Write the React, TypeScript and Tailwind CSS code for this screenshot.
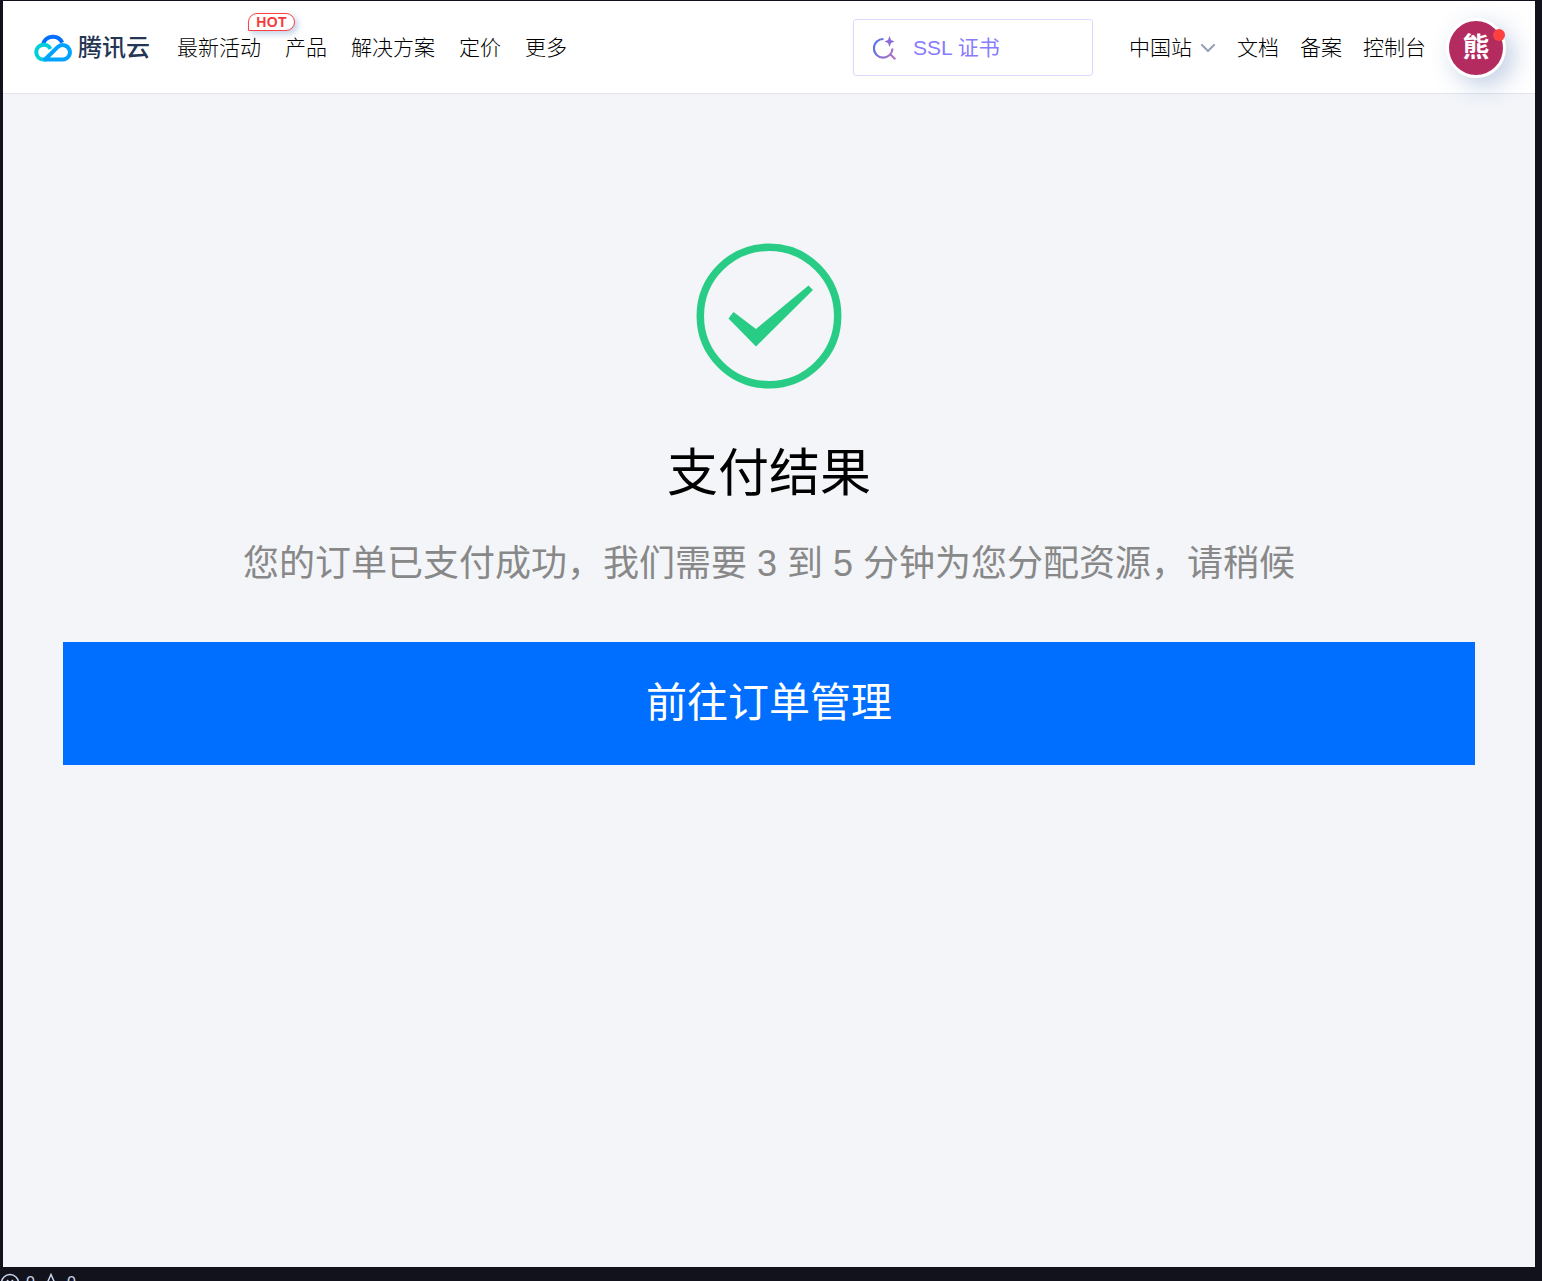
const NAV_LINKS = [
  { label: '最新活动', hot: true },
  { label: '产品', hot: false },
  { label: '解决方案', hot: false },
  { label: '定价', hot: false },
  { label: '更多', hot: false },
];

const USER_LINKS = ['文档', '备案', '控制台'];

function CloudLogo() {
  return (
    <svg width="38" height="28" viewBox="0 0 38 28" fill="none" strokeWidth="4" aria-hidden="true">
      <path d="M9.2 9.8 A10.2 10.2 0 0 1 28.2 8.6" stroke="#006eff" />
      <path d="M16.4 15 A7.4 7.4 0 1 0 9.2 25.5 H12" stroke="#00ced8" />
      <path d="M11 25.5 H28.8 A7.2 7.2 0 1 0 23.6 13.2 Z" stroke="#00a3ff" strokeLinejoin="round" />
    </svg>
  );
}

function SearchIcon() {
  return (
    <svg width="24" height="24" viewBox="0 0 24 24" fill="none" aria-hidden="true">
      <defs>
        <linearGradient id="searchGradient" x1="0" y1="4" x2="24" y2="22" gradientUnits="userSpaceOnUse">
          <stop stopColor="#4f6fee" />
          <stop offset="1" stopColor="#bd76c2" />
        </linearGradient>
      </defs>
      <path d="M10.5 3 A9.3 9.3 0 1 0 19.5 12.5 M16.8 17.8 L22.3 23.3" stroke="url(#searchGradient)" strokeWidth="2.2" />
      <path d="M16.5 0 L18 4 L21.5 5.5 L18 7 L16.5 11 L15 7 L11.5 5.5 L15 4 Z" fill="#8a6ddb" />
    </svg>
  );
}

function Header() {
  return (
    <header className="flex h-[93px] shrink-0 items-center border-b border-[#e2e4ea] bg-white pt-px pr-[29px] pl-[31px] text-[21px] leading-8 text-black">
      <a href="#" className="flex items-center gap-[6px] text-[24px] font-medium text-[#253554]">
        <CloudLogo />
        腾讯云
      </a>

      <nav className="ml-[27px] flex items-center gap-6 pt-px font-light">
        {NAV_LINKS.map((link) => (
          <a key={link.label} href="#" className="relative">
            {link.label}
            {link.hot && (
              <span className="absolute -top-[19px] left-[71px] flex h-[18px] w-[47px] items-center justify-center rounded-full rounded-bl-none border border-[#ff4040] bg-white text-[14px] font-bold tracking-wide text-[#f53b40] shadow-[3px_3px_6px_rgba(55,99,170,0.3)]">
                HOT
              </span>
            )}
          </a>
        ))}
      </nav>

      <label className="mr-9 ml-auto flex h-[57px] w-60 items-center gap-4 rounded-[3px] border border-[#dcd9ff] pl-[19px]">
        <SearchIcon />
        <input
          type="text"
          aria-label="搜索"
          placeholder="SSL 证书"
          className="w-40 bg-transparent outline-none placeholder:text-[#867cff]"
        />
      </label>

      <div className="flex items-center gap-[21px] pt-px font-light">
        <button type="button" className="flex items-center gap-2">
          中国站
          <svg width="16" height="10" viewBox="0 0 16 10" fill="none" stroke="#97a3b7" strokeWidth="2.2" aria-hidden="true">
            <path d="M2 2 L8 8 L14 2" strokeLinecap="round" />
          </svg>
        </button>
        {USER_LINKS.map((label) => (
          <a key={label} href="#">
            {label}
          </a>
        ))}
        <button
          type="button"
          className="relative -ml-px flex size-[60px] items-center justify-center rounded-full border-[3px] border-white bg-[#b32b5f] text-[27px] font-bold text-white shadow-[8px_8px_24px_rgba(55,99,170,0.3)]"
        >
          熊
          <span className="absolute top-2 -right-[2px] size-3 rounded-full bg-[#ff4040]" />
        </button>
      </div>
    </header>
  );
}

function SuccessIcon() {
  return (
    <svg width="146" height="146" viewBox="0 0 146 146" aria-hidden="true">
      <circle cx="73" cy="73" r="68.7" fill="none" stroke="#29cc85" strokeWidth="7.5" />
      <path d="M32.5 75.5 L37.5 69 L60 86 L112.5 42.5 L117 47 L60 103.5 Z" fill="#29cc85" />
    </svg>
  );
}

function StatusBar() {
  return (
    <footer className="flex h-[14px] shrink-0 items-start overflow-hidden pt-[6px] text-[16px] leading-5 text-[#c9d5ee]">
      <svg width="20" height="20" viewBox="0 0 20 20" fill="none" stroke="currentColor" strokeWidth="1.5" className="shrink-0" aria-hidden="true">
        <circle cx="10" cy="10" r="8.5" />
        <path d="M7 7 L13 13 M13 7 L7 13" />
      </svg>
      <span className="ml-[6px]">0</span>
      <svg width="16" height="20" viewBox="0 0 16 20" fill="none" stroke="currentColor" strokeWidth="1.5" className="ml-2 shrink-0" aria-hidden="true">
        <path d="M8 1.5 L1 17 H15 Z" />
      </svg>
      <span className="ml-2">0</span>
    </footer>
  );
}

export default function App() {
  return (
    <div className="flex h-screen flex-col bg-[#12121c] pt-px font-['Liberation_Sans','Noto_Sans_CJK_SC',sans-serif]">
      <div className="mr-[7px] ml-[3px] flex grow flex-col bg-[#f3f5f9]">
        <Header />
        <main className="flex flex-col items-center px-[60px] pt-[149px]">
          <SuccessIcon />
          <h1 className="mt-[50px] text-[51px] leading-[70px] text-black">支付结果</h1>
          <p className="mt-[30px] text-center text-[36px] leading-[50px] text-[#888]">
            您的订单已支付成功，我们需要 3 到 5 分钟为您分配资源，请稍候
          </p>
          <button type="button" className="mt-[53px] h-[123px] w-full bg-[#006eff] text-[41px] text-white">
            前往订单管理
          </button>
        </main>
      </div>
      <StatusBar />
    </div>
  );
}
